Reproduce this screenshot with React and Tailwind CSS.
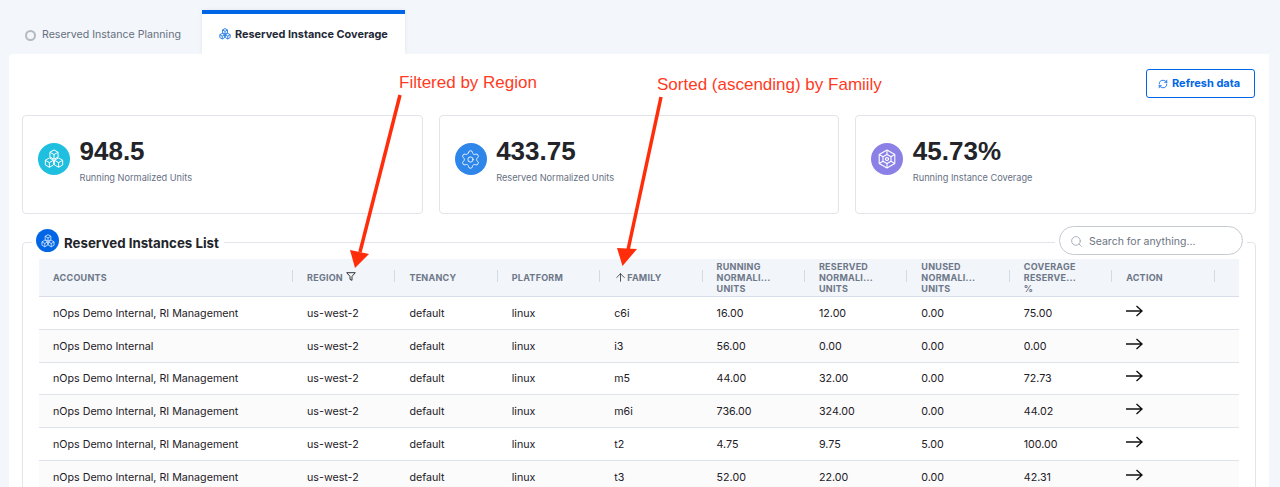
import { ArrowUp, Search, Settings, RefreshCw } from "lucide-react";

const rows = [
  ["nOps Demo Internal, RI Management", "c6i", "16.00", "12.00", "0.00", "75.00"],
  ["nOps Demo Internal", "i3", "56.00", "0.00", "0.00", "0.00"],
  ["nOps Demo Internal, RI Management", "m5", "44.00", "32.00", "0.00", "72.73"],
  ["nOps Demo Internal, RI Management", "m6i", "736.00", "324.00", "0.00", "44.02"],
  ["nOps Demo Internal, RI Management", "t2", "4.75", "9.75", "5.00", "100.00"],
  ["nOps Demo Internal, RI Management", "t3", "52.00", "22.00", "0.00", "42.31"],
];

const gridCols = "grid grid-cols-[254px_repeat(9,102.4px)_24.4px]";

const Cube = ({ x, y, r }) => {
  const h = r * 0.866;
  return (
    <g>
      <path d={`M${x} ${y - r}L${x + h} ${y - r / 2}V${y + r / 2}L${x} ${y + r}L${x - h} ${y + r / 2}V${y - r / 2}Z`} />
      <path d={`M${x - h} ${y - r / 2}L${x} ${y}L${x + h} ${y - r / 2}M${x} ${y}V${y + r}`} />
    </g>
  );
};

const CubesIcon = ({ size = 20, stroke = "white", width = 1 }) => (
  <svg width={size} height={size} viewBox="0 0 20 20" fill="none" stroke={stroke} strokeWidth={width} strokeLinejoin="round">
    <Cube x={10} y={5.6} r={4.7} />
    <Cube x={5.4} y={13.6} r={4.7} />
    <Cube x={14.6} y={13.6} r={4.7} />
  </svg>
);

const WebIcon = () => (
  <svg width="20" height="20" viewBox="0 0 20 20" fill="none" stroke="white" strokeWidth="1.1" strokeLinejoin="round">
    <path d="M10 1L17.8 5.5V14.5L10 19L2.2 14.5V5.5Z" />
    <path d="M10 5.5L14 7.8V12.2L10 14.5L6 12.2V7.8Z" />
    <path d="M10 1V5.5M17.8 5.5L14 7.8M17.8 14.5L14 12.2M10 19V14.5M2.2 14.5L6 12.2M2.2 5.5L6 7.8" />
    <path d="M10 8.5L11.5 9.2V10.8L10 11.5L8.5 10.8V9.2Z" />
  </svg>
);

const FilterIcon = () => (
  <svg width="10" height="9" viewBox="0 0 10 9" fill="none" stroke="#30343c" strokeWidth="1" strokeLinejoin="round">
    <path d="M0.7 0.7H9.3L6 4.4V8.3L4 7.4V4.4Z" />
  </svg>
);

const ActionArrow = () => (
  <svg width="17" height="12" viewBox="0 0 17 12" fill="none" stroke="#111" strokeWidth="1.4">
    <path d="M0 6H15.5M10.5 1L16 6L10.5 11" />
  </svg>
);

const StatCard = ({ color, icon, value, label }) => (
  <div className="h-[99px] rounded border border-[#e1e4e9] pl-[15px] pt-[20px] flex items-start gap-[9.5px]">
    <div className={`w-8 h-8 mt-[7px] rounded-full flex items-center justify-center ${color}`}>{icon}</div>
    <div>
      <div className="font-['Liberation_Sans',sans-serif] text-[26px] leading-[30px] font-bold text-[#22242a]">{value}</div>
      <div className="mt-[5px] text-[9.2px] leading-[14px] text-[#677184]">{label}</div>
    </div>
  </div>
);

const HeadCell = ({ children }) => (
  <div className="relative flex items-center pl-[14px] pr-2 text-[9px] leading-[11px] font-bold text-[#6d7788] tracking-[0.25px]">
    {children}
    <span className="absolute right-0 top-[11px] h-[12px] w-px bg-[#d5dae2]" />
  </div>
);

const App = () => {
  return (
    <div className="relative h-screen overflow-hidden bg-[#f3f6fa] font-['Inter',sans-serif]">
      <div className="h-[54px] pt-[10px] pl-[22px] flex">
        <div className="w-[180px] h-[44px] pt-[6px] flex items-center pl-[4px] gap-[6px] text-[10.6px] text-[#667080]">
          <span className="w-[11px] h-[11px] -ml-px rounded-full border-2 border-[#b4b9c2]" />
          Reserved Instance Planning
        </div>
        <div className="w-[203px] h-[44px] bg-white border-t-4 border-[#0066e6] flex items-center pl-[17px] gap-[4px] text-[10.9px] font-bold text-[#1f2937] shadow-[0_0_4px_rgba(30,50,90,0.08)]">
          <CubesIcon size={12} stroke="#2a7de1" width={1.6} />
          Reserved Instance Coverage
        </div>
      </div>

      <div className="relative ml-[9px] mr-[11px] bg-white rounded-tl px-[13px] pt-[15px] h-[500px]">
        <div className="flex justify-end pr-px">
          <button className="w-[109px] h-[29px] rounded-[3px] border border-[#0066e6] flex items-center pl-[11px] gap-[4px] text-[11px] font-bold text-[#0066e6]">
            <RefreshCw size={10} strokeWidth={2} />
            Refresh data
          </button>
        </div>

        <div className="mt-[17px] grid grid-cols-3 gap-4">
          <StatCard color="bg-[#1fbfe0]" icon={<CubesIcon size={20} />} value="948.5" label="Running Normalized Units" />
          <StatCard color="bg-[#2f86ea]" icon={<Settings size={21} color="white" strokeWidth={1} />} value="433.75" label="Reserved Normalized Units" />
          <StatCard color="bg-[#8a80e6]" icon={<WebIcon />} value="45.73%" label="Running Instance Coverage" />
        </div>

        <section className="mt-[28px] rounded border border-[#e1e4e9] px-4">
          <div className="-mt-[17px] h-[29px] flex items-center justify-between">
            <div className="-ml-[7px] h-[25px] flex items-center gap-[5px] bg-white pl-1 pr-[5px]">
              <div className="w-[23px] h-[23px] rounded-full bg-[#0066e6] flex items-center justify-center">
                <CubesIcon size={14} width={1} />
              </div>
              <h2 className="text-[13.3px] font-bold text-[#22242a] mt-[7px]">Reserved Instances List</h2>
            </div>
            <div className="-mr-[8px] bg-white px-1">
              <div className="w-[184px] h-[29px] pt-[2px] rounded-full border border-[#c6cad2] flex items-center pl-[10px] gap-[6px] text-[10.5px] text-[#6c7482]">
                <Search size={13} color="#9aa3b2" strokeWidth={1.5} />
                Search for anything...
              </div>
            </div>
          </div>

          <div className={`${gridCols} mt-1 h-[38px] bg-[#f2f5f9] border-b border-[#d8dde8] uppercase`}>
            <HeadCell>Accounts</HeadCell>
            <HeadCell>
              Region
              <span className="ml-[3px] -mt-[3px]"><FilterIcon /></span>
            </HeadCell>
            <HeadCell>Tenancy</HeadCell>
            <HeadCell>Platform</HeadCell>
            <HeadCell>
              <ArrowUp size={13} color="#30343c" strokeWidth={1.5} className="-mt-[1px]" />
              Family
            </HeadCell>
            <HeadCell><span>Running<br />Normali...<br />Units</span></HeadCell>
            <HeadCell><span>Reserved<br />Normali...<br />Units</span></HeadCell>
            <HeadCell><span>Unused<br />Normali...<br />Units</span></HeadCell>
            <HeadCell><span>Coverage<br />Reserve...<br />%</span></HeadCell>
            <HeadCell>Action</HeadCell>
            <div />
          </div>

          {rows.map((row, index) => (
            <div
              key={index}
              className={`${gridCols} h-[32.8px] pt-[2px] items-center border-b border-[#dfe3ec] text-[10.7px] text-[#1d2026] ${index % 2 === 1 ? "bg-[#fbfbfc]" : "bg-white"}`}
            >
              <div className="pl-[14px]">{row[0]}</div>
              <div className="pl-[14px]">us-west-2</div>
              <div className="pl-[14px]">default</div>
              <div className="pl-[14px]">linux</div>
              <div className="pl-[14px]">{row[1]}</div>
              <div className="pl-[14px]">{row[2]}</div>
              <div className="pl-[14px]">{row[3]}</div>
              <div className="pl-[14px]">{row[4]}</div>
              <div className="pl-[14px]">{row[5]}</div>
              <div className="pl-[14px] -mt-[6px]"><ActionArrow /></div>
              <div />
            </div>
          ))}
        </section>
      </div>

      {/* annotations drawn over the screenshot */}
      <div className="absolute left-[399px] top-[73px] font-['Liberation_Sans',sans-serif] text-[17px] leading-[19px] text-[#ff3b1f]">Filtered by Region</div>
      <div className="absolute left-[657px] top-[75px] font-['Liberation_Sans',sans-serif] text-[17px] leading-[19px] text-[#ff3b1f]">Sorted (ascending) by Famiily</div>
      <svg className="absolute left-0 top-0 pointer-events-none" width="1280" height="487" fill="#ff2d0a" stroke="none">
        <path d="M400 95L360 252" stroke="#ff2d0a" strokeWidth="3.5" fill="none" />
        <path d="M355 268L350 250L369 254Z" />
        <path d="M661 97L628 250" stroke="#ff2d0a" strokeWidth="3.5" fill="none" />
        <path d="M622.5 266L617 248L637 249Z" />
      </svg>
    </div>
  );
};

export default App;
